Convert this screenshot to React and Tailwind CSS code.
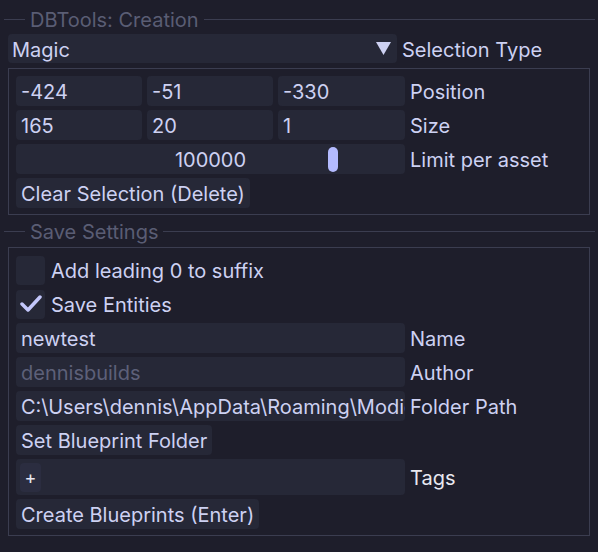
import React from 'react'

const Frame = ({ className = '', children }) => (
  <div
    className={`h-[30px] rounded-[4px] bg-[#262837] flex items-center px-[5px] pt-[2px] overflow-hidden whitespace-nowrap ${className}`}
  >
    {children}
  </div>
)

const Label = ({ children, className = '' }) => (
  <span className={`ml-[5px] pt-[2px] whitespace-nowrap text-[#cdd1f2] ${className}`}>{children}</span>
)

const SectionTitle = ({ text }) => (
  <div className="flex items-center h-[24px]">
    <div className="ml-[4px] w-[21px] h-px bg-[#3b3d50]"></div>
    <span className="px-[5px] pt-[2px] text-[#5a5d74] whitespace-nowrap">{text}</span>
    <div className="flex-1 mr-[3px] h-px bg-[#3b3d50]"></div>
  </div>
)

const Checkbox = ({ checked, label }) => (
  <div className="flex items-center h-[30px]">
    <div className="w-[29px] h-[29px] rounded-[4px] bg-[#262837] flex items-center justify-center">
      {checked && (
        <svg width="22" height="18" viewBox="0 0 22 18">
          <polyline
            points="2,9 8,15 20,2"
            fill="none"
            stroke="#c3c7fb"
            strokeWidth="3.5"
            strokeLinecap="round"
            strokeLinejoin="round"
          />
        </svg>
      )}
    </div>
    <span className="ml-[6px] pt-[2px] text-[#cdd1f2]">{label}</span>
  </div>
)

const Button = ({ children }) => (
  <div className="flex">
    <div className="h-[30px] rounded-[4px] bg-[#262837] flex items-center px-[5px] pt-[2px] text-[#cdd1f2] whitespace-nowrap">
      {children}
    </div>
  </div>
)

export default function App() {
  return (
    <div
      className="w-[598px] h-[552px] bg-[#1e1e2b] text-[#cdd1f2] text-[20px] leading-[22px] overflow-hidden"
      style={{ fontFamily: 'Inter, "Noto Sans", sans-serif' }}
    >
      <div className="pt-[7px]">
        <SectionTitle text="DBTools: Creation" />
      </div>

      {/* Selection type combo */}
      <div className="mt-[3px] px-[8px] flex items-center">
        <div className="w-[389px] h-[29px] rounded-[4px] bg-[#262837] flex items-center justify-between pl-[4px] pr-[6px]">
          <span className="pt-[2px]">Magic</span>
          <svg width="15" height="13" viewBox="0 0 15 13">
            <polygon points="0,0 15,0 7.5,13" fill="#cdd1f2" />
          </svg>
        </div>
        <Label>Selection Type</Label>
      </div>

      {/* Selection box */}
      <div className="mt-[5px] mx-[8px] border border-[#3b3d50] pt-[7px] pb-[6px] pl-[7px] flex flex-col gap-[4px]">
        <div className="flex items-center">
          <div className="flex gap-[5px] w-[389px]">
            <Frame className="w-[126px]">-424</Frame>
            <Frame className="w-[126px]">-51</Frame>
            <Frame className="w-[127px]">-330</Frame>
          </div>
          <Label>Position</Label>
        </div>
        <div className="flex items-center">
          <div className="flex gap-[5px] w-[389px]">
            <Frame className="w-[126px]">165</Frame>
            <Frame className="w-[126px]">20</Frame>
            <Frame className="w-[127px]">1</Frame>
          </div>
          <Label>Size</Label>
        </div>
        <div className="flex items-center">
          <div className="relative w-[389px] h-[30px] rounded-[4px] bg-[#262837] flex items-center justify-center pt-[2px]">
            <span>100000</span>
            <div className="absolute left-[312px] top-[3px] w-[10px] h-[25px] rounded-full bg-[#b4bbff]"></div>
          </div>
          <Label>Limit per asset</Label>
        </div>
        <Button>Clear Selection (Delete)</Button>
      </div>

      <div className="mt-[4px]">
        <SectionTitle text="Save Settings" />
      </div>

      {/* Save settings box */}
      <div className="mt-[4px] mx-[8px] border border-[#3b3d50] pt-[7px] pb-[6px] pl-[7px] flex flex-col gap-[4px]">
        <Checkbox checked={false} label="Add leading 0 to suffix" />
        <Checkbox checked label="Save Entities" />
        <div className="flex items-center">
          <Frame className="w-[389px]">newtest</Frame>
          <Label>Name</Label>
        </div>
        <div className="flex items-center">
          <Frame className="w-[389px] text-[#5d6079]">dennisbuilds</Frame>
          <Label>Author</Label>
        </div>
        <div className="flex items-center">
          <Frame className="w-[389px] pr-0">C:\Users\dennis\AppData\Roaming\Modio\blueprints</Frame>
          <Label>Folder Path</Label>
        </div>
        <Button>Set Blueprint Folder</Button>
        <div className="flex items-center">
          <div className="w-[389px] h-[36px] rounded-[4px] bg-[#262837] flex items-center pl-[4px]">
            <div className="w-[21px] h-[29px] rounded-[4px] bg-[#2b2d40] flex items-center justify-center pt-[2px] text-[#e6e7f2] text-[18px]">
              +
            </div>
          </div>
          <Label className="text-[#e8e8f0]">Tags</Label>
        </div>
        <Button>Create Blueprints (Enter)</Button>
      </div>
    </div>
  )
}
